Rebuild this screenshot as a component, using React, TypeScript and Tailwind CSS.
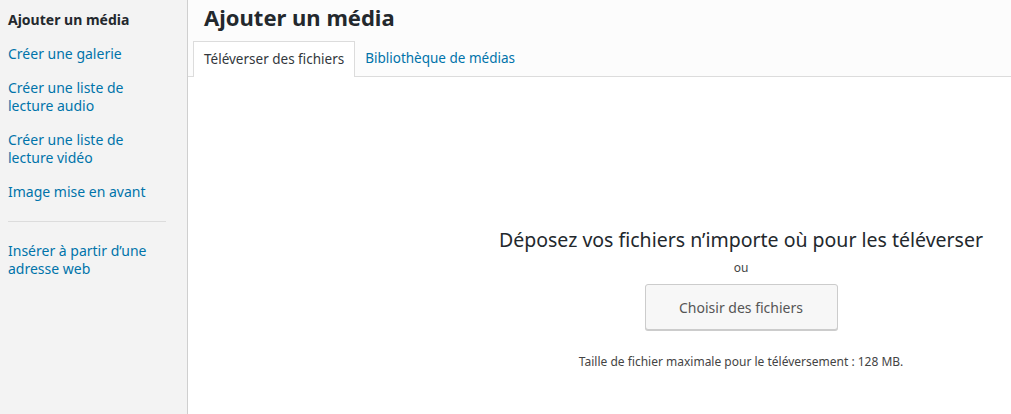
const menu = [
  { label: 'Ajouter un média', active: true },
  { label: 'Créer une galerie' },
  { label: 'Créer une liste de lecture audio' },
  { label: 'Créer une liste de lecture vidéo' },
  { label: 'Image mise en avant' },
];

export default function App() {
  return (
    <div
      className="flex h-[414px] w-[1011px] overflow-hidden bg-white text-[#23282d]"
      style={{ fontFamily: '"Noto Sans", "Open Sans", sans-serif' }}
    >
      {/* left menu */}
      <aside className="w-[188px] shrink-0 border-r border-[#cfcfcf] bg-[#f3f3f3] pt-[3px]">
        {menu.map((item) => (
          <div
            key={item.label}
            className={
              'w-[166px] px-2 py-2 text-[14px] leading-[18px] ' +
              (item.active ? 'font-bold text-[#23282d]' : 'text-[#0073aa]')
            }
          >
            {item.label}
          </div>
        ))}
        <div className="mx-2 my-3 h-px w-[158px] bg-[#dcdcdc]" />
        <div className="w-[166px] px-2 py-2 text-[14px] leading-[18px] text-[#0073aa]">
          Insérer à partir d’une adresse web
        </div>
      </aside>

      {/* main frame */}
      <main className="flex flex-1 flex-col">
        <div className="border-b border-[#dcdcdc] bg-[#fcfcfc]">
          <h1 className="h-[41px] pl-4 pt-[2px] text-[22px] leading-[30px] font-bold">Ajouter un média</h1>
          <div className="flex pl-[5px]">
            <div className="-mb-px h-[36px] border border-b-0 border-[#dcdcdc] bg-white px-[10px] text-[13.5px] leading-[35px] text-[#32373c]">
              Téléverser des fichiers
            </div>
            <div className="h-[35px] px-[10px] text-[13.5px] leading-[35px] text-[#0073aa]">
              Bibliothèque de médias
            </div>
          </div>
        </div>

        <div className="flex flex-1 pl-[283px]">
          <div className="flex flex-1 flex-col items-center pt-[150px] text-center">
            <p className="text-[19.5px] leading-[26px] text-[#23282d]">
              Déposez vos fichiers n’importe où pour les téléverser
            </p>
            <p className="mt-[6px] text-[12px] leading-[18px] text-[#444]">ou</p>
            <button className="mt-[7px] h-[46px] w-[193px] rounded-[3px] border border-[#cccccc] bg-[#f7f7f7] text-[14px] text-[#555] shadow-[0_1px_0_#ccc]">
              Choisir des fichiers
            </button>
            <p className="mt-[23px] text-[12px] leading-[18px] text-[#444]">
              Taille de fichier maximale pour le téléversement : 128 MB.
            </p>
          </div>
        </div>
      </main>
    </div>
  );
}
